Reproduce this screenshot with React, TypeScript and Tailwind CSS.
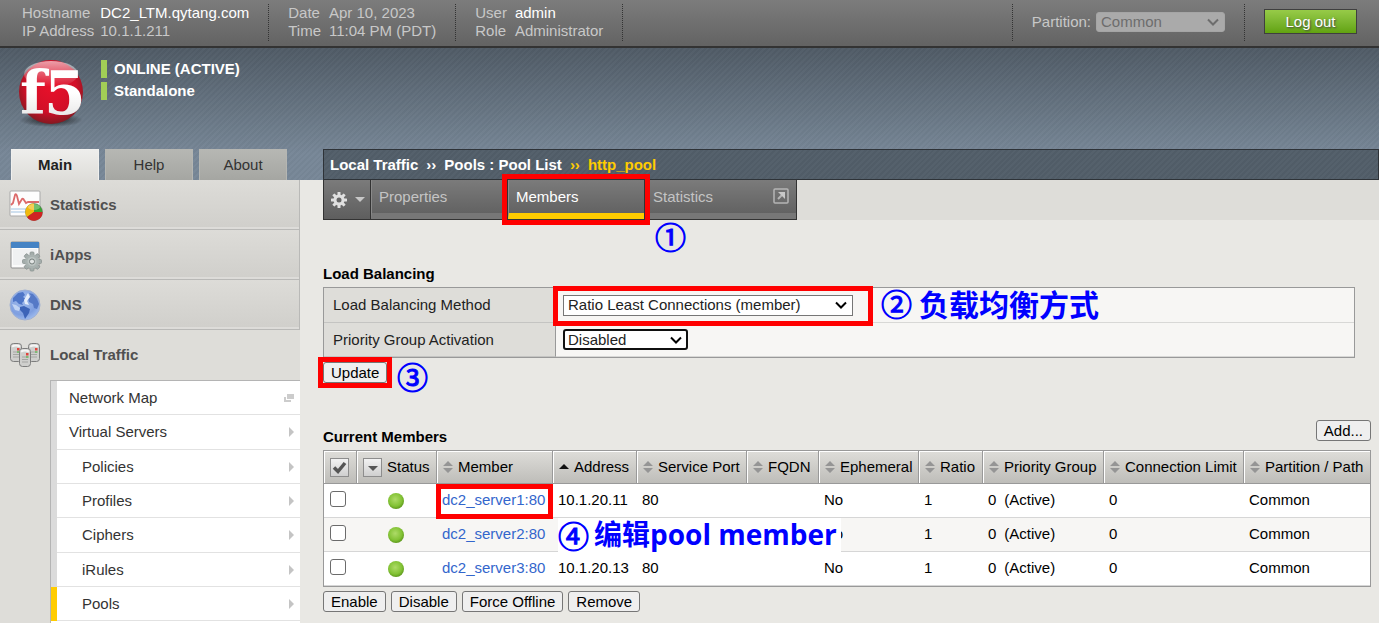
import type { ReactNode } from 'react';

const STRIPES =
  'bg-[repeating-linear-gradient(135deg,rgba(255,255,255,0.02)_0px,rgba(255,255,255,0.02)_2px,rgba(0,0,0,0.02)_2px,rgba(0,0,0,0.02)_4px)]';

function Logo() {
  return (
    <svg viewBox="0 0 72 72" className="size-[72px] overflow-visible" aria-label="f5">
      <defs>
        <radialGradient id="ball" cx="0.5" cy="0.42" r="0.6">
          <stop offset="0" stopColor="#e8102a" />
          <stop offset="0.65" stopColor="#d20f28" />
          <stop offset="1" stopColor="#7c1a20" />
        </radialGradient>
        <linearGradient id="shine" x1="0" y1="0" x2="0" y2="1">
          <stop offset="0" stopColor="#fff" stopOpacity="0.6" />
          <stop offset="1" stopColor="#fff" stopOpacity="0" />
        </linearGradient>
        <radialGradient id="shade">
          <stop offset="0" stopColor="#111" stopOpacity="0.9" />
          <stop offset="1" stopColor="#111" stopOpacity="0" />
        </radialGradient>
        <linearGradient id="letters" x1="0" y1="0" x2="0" y2="1">
          <stop offset="0.5" stopColor="#fff" />
          <stop offset="1" stopColor="#ddd" />
        </linearGradient>
      </defs>
      <ellipse cx="36" cy="60" rx="32" ry="7" fill="url(#shade)" />
      <circle cx="36" cy="32" r="32" fill="url(#ball)" />
      <ellipse cx="36" cy="14" rx="27" ry="13" fill="url(#shine)" />
      <g fill="url(#letters)" fontWeight="700" fontFamily="DejaVu Serif, serif">
        <text x="5" y="54" fontSize="60">f</text>
        <text x="29" y="54" fontSize="60">5</text>
      </g>
    </svg>
  );
}

function StatisticsIcon() {
  return (
    <svg viewBox="0 0 36 36" className="size-9">
      <rect x="2" y="4" width="30" height="25" rx="1" fill="#fdfdfd" stroke="#a9a9a9" />
      <path d="M3 22h28M3 25h20" stroke="#cfe0ef" strokeWidth="2" />
      <path d="M3 18l2-2 2-8q1-2 2 1l2 8 3-5q1-1 2 1l2 3 2-1h11" fill="none" stroke="#dc6a6a" strokeWidth="1.800" />
      <circle cx="26" cy="25" r="8.500" fill="#39a532" stroke="#666" strokeWidth="0.500" />
      <path d="M26 25V16.500a8.500 8.500 0 0 0-7 13.500z" fill="#f1b90e" />
      <path d="M26 25l-7 5a8.500 8.500 0 0 0 15.500-5z" fill="#cf2323" />
      <ellipse cx="26" cy="20" rx="6" ry="3" fill="#fff" opacity="0.3" />
    </svg>
  );
}

function AppsIcon() {
  const teeth = [0, 45, 90, 135];
  return (
    <svg viewBox="0 0 36 36" className="size-9">
      <rect x="3" y="5" width="28" height="26" rx="1" fill="#fbfbfb" stroke="#8f8f8f" />
      <rect x="3" y="5" width="28" height="6" fill="#4583c4" />
      <rect x="5" y="12" width="24" height="16" fill="#f0f1f2" />
      <g fill="#a3acaa" stroke="#8b9492" strokeWidth="0.800">
        {teeth.map((a) => (
          <rect key={a} x="22" y="15" width="4" height="19" rx="1" transform={`rotate(${a} 24 24.500)`} />
        ))}
      </g>
      <circle cx="24" cy="24.500" r="7" fill="#a9b2b0" />
      <circle cx="24" cy="24.500" r="4.500" fill="#bcc4c2" />
      <circle cx="24" cy="24.500" r="2.500" fill="#e2e5e4" stroke="#77807e" />
    </svg>
  );
}

function DnsIcon() {
  return (
    <svg viewBox="0 0 36 36" className="size-9">
      <defs>
        <radialGradient id="sea" cx="0.4" cy="0.3" r="0.75">
          <stop offset="0" stopColor="#a3bdec" />
          <stop offset="0.7" stopColor="#7f9fe0" />
          <stop offset="1" stopColor="#a4c0f0" />
        </radialGradient>
      </defs>
      <circle cx="17" cy="18" r="15" fill="url(#sea)" stroke="#9fb0d3" />
      <path d="M5 11l5-5 5-1 2 3-2 2 3 2-4 4 1 2-4-1-3-3-3 1z" fill="#4f76c8" />
      <path d="M12 20l4-1 6 3-1 4-4 6-2-6-3-3z" fill="#3d64b8" />
      <path d="M21 6l4 1 4 5 2 5-2 5-3-1-1-4-4-2-1-4 3-2z" fill="#5579c6" />
      <path d="M16 13l4-7 2 4-3 4 2 4-4-1z" fill="#e6eefb" />
      <path d="M4 17l4 1 4 3-1 3-4-1z" fill="#d9e5fa" opacity="0.7" />
    </svg>
  );
}

function Server({ x, y }: { x: number; y: number }) {
  return (
    <g transform={`translate(${x} ${y})`}>
      <rect x="0.500" y="0.500" width="11" height="18" rx="3" fill="#cfcfcd" stroke="#7d7d7d" />
      <path d="M2 3.500q4-2 8 0" stroke="#f5f5f5" strokeWidth="2" fill="none" />
      <path d="M3 9h6M3 11.500h6M3 14h6" stroke="#a5a5a3" />
      <rect x="7" y="5" width="2.500" height="2.500" fill="#e0443c" />
      <rect x="7" y="8" width="2.500" height="2" fill="#7fba76" />
    </g>
  );
}

function TrafficIcon() {
  return (
    <svg viewBox="0 0 36 36" className="size-9">
      <Server x={2} y={6} />
      <Server x={20} y={6} />
      <Server x={11} y={11} />
    </svg>
  );
}

const NAV: { label: string; icon: ReactNode }[] = [
  { label: 'Statistics', icon: <StatisticsIcon /> },
  { label: 'iApps', icon: <AppsIcon /> },
  { label: 'DNS', icon: <DnsIcon /> },
];

const SUBNAV = [
  { label: 'Network Map', nested: false, popup: true },
  { label: 'Virtual Servers', nested: false },
  { label: 'Policies', nested: true },
  { label: 'Profiles', nested: true },
  { label: 'Ciphers', nested: true },
  { label: 'iRules', nested: true },
  { label: 'Pools', nested: true, active: true },
];

const COLUMNS = ['Member', 'Address', 'Service Port', 'FQDN', 'Ephemeral', 'Ratio', 'Priority Group', 'Connection Limit', 'Partition / Path'];

const MEMBERS = [
  { name: 'dc2_server1:80', address: '10.1.20.11', port: '80' },
  { name: 'dc2_server2:80', note: true },
  { name: 'dc2_server3:80', address: '10.1.20.13', port: '80' },
];

function InfoPair({ rows, gap = 'gap-x-2' }: { rows: [string, string, boolean?][]; gap?: string }) {
  return (
    <dl className={`grid grid-cols-[auto_auto] items-start self-start leading-[18px] ${gap}`}>
      {rows.map(([k, v, strong]) => (
        <div key={k} className="contents">
          <dt className="text-[#c8c8c8]">{k}</dt>
          <dd className={strong ? 'text-white' : 'text-[#c8c8c8]'}>{v}</dd>
        </div>
      ))}
    </dl>
  );
}

function Divider() {
  return <div className="h-[37px] border-l border-dotted border-[#333]" />;
}

function Chevron() {
  return (
    <svg viewBox="0 0 12 8" className="pointer-events-none absolute top-1/2 right-[6px] h-2 w-3 -translate-y-1/2">
      <path d="M1 1.500l5 5 5-5" fill="none" stroke="currentColor" strokeWidth="2" />
    </svg>
  );
}

function PushButton({ children }: { children: ReactNode }) {
  return (
    <button className="h-[21px] rounded-[3px] border border-[#767676] bg-[#efefef] px-[7px] leading-[18px] text-black">
      {children}
    </button>
  );
}

function CircledNumber({ children }: { children: ReactNode }) {
  return (
    <span className="font-['Noto_Sans_CJK_SC',sans-serif] text-[31px] leading-8 font-normal [-webkit-text-stroke:1px_#00f]">
      {children}
    </span>
  );
}

function SortArrows() {
  return (
    <svg viewBox="0 0 10 12" className="h-3 w-[10px]">
      <path d="M5 0l5 5H0zM5 12l5-5H0z" fill="#959595" />
    </svg>
  );
}

const TH = 'h-[33px] border-b border-b-[#999] border-r border-r-[#999] bg-linear-to-b from-[#deddd9] to-[#bebdb9] p-0 shadow-[inset_1px_1px_0_#fff] font-normal last:border-r-0';

export default function App() {
  return (
    <div className="flex h-screen flex-col overflow-hidden bg-[#e9e8e4] font-['Liberation_Sans',Arial,sans-serif] text-[15px] leading-[18px] text-black">
      <header className="flex h-12 shrink-0 justify-between border-b-2 border-[#333] bg-linear-to-b from-[#7c7c7c] to-[#636363] pt-1">
        <div className="flex gap-[19px] pl-[22px]">
          <InfoPair gap="gap-x-[6px]" rows={[['Hostname', 'DC2_LTM.qytang.com', true], ['IP Address', '10.1.1.211']]} />
          <Divider />
          <InfoPair rows={[['Date', 'Apr 10, 2023'], ['Time', '11:04 PM (PDT)']]} />
          <Divider />
          <InfoPair rows={[['User', 'admin', true], ['Role', 'Administrator']]} />
          <Divider />
        </div>
        <div className="flex gap-[19px] pr-[22px]">
          <Divider />
          <div className="flex items-start gap-[5px] pt-2">
            <label htmlFor="partition" className="leading-5 text-[#c8c8c8]">Partition:</label>
            <div className="relative w-[129px] text-[#6d6d6d]">
              <select id="partition" disabled className="block h-5 w-full appearance-none rounded-[3px] border border-[#a5a5a5] bg-[#aaa] pl-1 leading-[18px] text-[#6d6d6d] opacity-100">
                <option>Common</option>
              </select>
              <Chevron />
            </div>
          </div>
          <Divider />
          <button className="mt-[5px] h-[25px] w-[93px] border border-[#3f3f3f] bg-linear-to-b from-[#97cb48] to-[#62a30f] text-white [text-shadow:1px_1px_2px_#444]">
            Log out
          </button>
        </div>
      </header>

      <div className="shrink-0 bg-linear-to-b from-[#505b66] to-[#778797] to-80%">
        <div className={`flex h-[132px] flex-col justify-between ${STRIPES}`}>
          <div className="flex gap-[14px] pt-3 pl-[15px] font-bold text-white">
            <Logo />
            <div className="flex flex-col gap-1">
              <div className="border-l-6 border-[#a2ce56] pl-[7px]">ONLINE (ACTIVE)</div>
              <div className="border-l-6 border-[#a2ce56] pl-[7px]">Standalone</div>
            </div>
          </div>
          <div className="flex items-end">
            <nav className="flex w-[323px] shrink-0 gap-[6px] pl-[11px] text-[#333]">
              <button className="h-[31px] w-[88px] border border-b-0 border-[#f0f0ee] bg-linear-to-b from-[#eeeeec] to-[#deddd9] font-bold text-[#222]">Main</button>
              <button className="h-[31px] w-[88px] border border-b-0 border-[#b5b6b2] bg-linear-to-b from-[#b6b7b3] to-[#a5a6a2]">Help</button>
              <button className="h-[31px] w-[88px] border border-b-0 border-[#b5b6b2] bg-linear-to-b from-[#b6b7b3] to-[#a5a6a2]">About</button>
            </nav>
            <div className="min-w-0 flex-1 border border-[#2e3338] bg-[#525e69]">
              <h1 className={`flex h-[29px] items-center gap-[8px] pl-[6px] font-bold whitespace-nowrap text-white ${STRIPES}`}>
                <span>Local Traffic</span><span>››</span><span>Pools : Pool List</span>
                <span className="text-[#fc0]">››</span><span className="text-[#fc0]">http_pool</span>
              </h1>
            </div>
          </div>
        </div>
      </div>

      <div className="flex min-h-0 flex-1">
        <aside className="w-[300px] shrink-0 bg-[#deddd9] text-[#333]">
          {NAV.map((n) => (
            <a key={n.label} href="#" className="flex h-[50px] items-center gap-[6px] border-r border-b border-[#b9b9b7] bg-linear-to-b from-[#dddcd8] to-[#d0cfcb] pl-2 font-bold text-[#505050] shadow-[inset_0_-2px_0_#dddcd9]">
              {n.icon}{n.label}
            </a>
          ))}
          <a href="#" className="flex h-[50px] items-center gap-[6px] pl-2 font-bold text-[#505050]">
            <TrafficIcon />Local Traffic
          </a>
          <ul className="ml-[50px] border-t border-l border-[#b4b4b4] bg-white pb-1">
            {SUBNAV.map((s) => (
              <li key={s.label} className={`h-[34px] border-l-6 nth-[3n+2]:h-[35px] ${s.active ? 'border-[#fc0]' : 'border-[#dbdbdb]'}`}>
                <a href="#" className={`flex h-full items-center justify-between border-b border-[#e2e2e2] pr-[6px] ${s.nested ? 'pl-[25px]' : 'pl-3'}`}>
                  {s.label}
                  {s.popup ? (
                    <svg viewBox="0 0 10 8" className="h-2 w-[10px]"><path d="M3 0h7v5H3zM0 3h2v3h5v2H0z" fill="#ccc" /></svg>
                  ) : (
                    <svg viewBox="0 0 5 10" className="h-[10px] w-[5px]"><path d="M0 0l5 5-5 5z" fill="#c4c4c4" /></svg>
                  )}
                </a>
              </li>
            ))}
          </ul>
        </aside>

        <main className="flex min-w-0 flex-1 flex-col pl-[23px]">
          <div className="flex h-10 shrink-0 bg-[#deddd9]">
            <nav className="flex w-[474px] border border-t-0 border-[#333] bg-linear-to-b from-[#7b7b7b] to-[#5e5e5e] text-[#c4c4c4]">
              <button aria-label="Options" className="flex w-[47px] items-center gap-2 border-r border-[#333] pl-[7px]">
                <svg viewBox="0 0 16 16" className="size-4">
                  <g fill="#e0e0e0">
                    {[0, 45, 90, 135].map((a) => (
                      <rect key={a} x="6.500" y="0" width="3" height="16" rx="0.500" transform={`rotate(${a} 8 8)`} />
                    ))}
                    <circle cx="8" cy="8" r="5.500" />
                  </g>
                  <circle cx="8" cy="8" r="2.500" fill="#666" />
                </svg>
                <svg viewBox="0 0 10 5" className="h-[5px] w-[10px]"><path d="M0 0h10L5 5z" fill="#c8c8c8" /></svg>
              </button>
              <a href="#" className="w-[136px] border-b-6 border-l border-b-[#777] border-l-[#8a8a8a] pt-2 pl-[7px]">Properties</a>
              <a href="#" className="relative w-[138px] border-x border-x-[#333] text-white">
                <span className="block h-full border-b-6 border-l border-b-[#fc0] border-l-[#8a8a8a] pt-2 pl-[7px]">Members</span>
                <span className="pointer-events-none absolute -inset-[6px] z-10 border-5 border-[#f00]" />
                <span className="absolute top-10 left-[147px] text-[#00f]"><CircledNumber>①</CircledNumber></span>
              </a>
              <a href="#" className="flex flex-1 justify-between border-b-6 border-[#777] pt-2 pr-[7px] pl-2">
                Statistics
                <svg viewBox="0 0 16 16" className="size-4" fill="none" stroke="#b5b5b5">
                  <rect x="1" y="1" width="14" height="14" rx="1" strokeWidth="1.500" />
                  <path d="M5 11l5-5" strokeWidth="2" /><path d="M5 4h7v7z" fill="#c8c8c8" stroke="none" />
                </svg>
              </a>
            </nav>
          </div>

          <h2 className="mt-[45px] font-bold">Load Balancing</h2>
          <div className="mt-1 mr-6">
            <table className="w-full table-fixed border-separate border-spacing-0 border border-[#999]">
              <tbody>
                <tr>
                  <th className="h-[35px] w-[232px] border-r border-b border-r-[#999] border-b-[#c4c4c2] bg-[#deddd9] pl-[9px] text-left font-normal text-[#222]">
                    <label htmlFor="method">Load Balancing Method</label>
                  </th>
                  <td className="border-b border-[#d8d8d6] bg-[#f7f6f4] p-0 pl-[7px]">
                    <div className="relative w-[290px]">
                      <select id="method" className="block h-[21px] w-full appearance-none border border-[#767676] bg-white pl-1 leading-[18px] text-[#222]">
                        <option>Ratio Least Connections (member)</option>
                      </select>
                      <Chevron />
                      <span className="pointer-events-none absolute -top-[9px] -right-5 -bottom-[10px] -left-[10px] border-5 border-[#f00]" />
                      <div className="absolute -top-2 left-[318px] flex items-center gap-[7px] whitespace-nowrap text-[#00f]">
                        <CircledNumber>②</CircledNumber>
                        <span className="font-['Noto_Sans_CJK_SC',sans-serif] text-[30px] leading-8 font-bold">负载均衡方式</span>
                      </div>
                    </div>
                  </td>
                </tr>
                <tr>
                  <th className="h-[34px] border-r border-b border-r-[#999] border-b-[#c4c4c2] bg-[#deddd9] pl-[9px] text-left font-normal text-[#222]">
                    <label htmlFor="priority">Priority Group Activation</label>
                  </th>
                  <td className="border-b border-[#d8d8d6] bg-[#f7f6f4] p-0 pl-[7px]">
                    <div className="relative w-[125px]">
                      <select id="priority" className="block h-[21px] w-full appearance-none rounded-[3px] border-2 border-[#101010] bg-white pl-[3px] leading-[17px] text-[#222]">
                        <option>Disabled</option>
                      </select>
                      <Chevron />
                    </div>
                  </td>
                </tr>
              </tbody>
            </table>
          </div>
          <div className="relative mt-1 w-fit">
            <PushButton>Update</PushButton>
            <span className="pointer-events-none absolute -inset-[5px] border-5 border-[#f00]" />
            <span className="absolute -top-[2px] left-[74px] text-[#00f]"><CircledNumber>③</CircledNumber></span>
          </div>

          <section className="mt-[37px] mr-2">
            <div className="flex h-[30px] items-start justify-between">
              <h2 className="mt-2 font-bold">Current Members</h2>
              <PushButton>Add...</PushButton>
            </div>
            <table className="w-full border-separate border-spacing-0 border border-[#999] whitespace-nowrap">
              <colgroup>
                <col className="w-[33px]" /><col className="w-[80px]" /><col className="w-[116px]" /><col className="w-[84px]" />
                <col className="w-[110px]" /><col className="w-[72px]" /><col className="w-[100px]" /><col className="w-[64px]" />
                <col className="w-[121px]" /><col className="w-[140px]" /><col className="w-[126px]" />
              </colgroup>
              <thead>
                <tr>
                  <th className={TH}>
                    <button aria-label="Select all" className="ml-[6px] block size-[19px] border border-[#8d8d8d] bg-linear-to-b from-[#f2f2f2] to-[#cfcfcf]">
                      <svg viewBox="0 0 17 17" className="size-[17px]"><path d="M3 8.500l4 4L14 4" fill="none" stroke="#555" strokeWidth="3.500" /></svg>
                    </button>
                  </th>
                  <th className={TH}>
                    <div className="flex items-center gap-[5px] pl-[6px]">
                      <button aria-label="Filter status" className="size-[19px] border border-[#8d8d8d] bg-linear-to-b from-[#f2f2f2] to-[#cfcfcf]">
                        <svg viewBox="0 0 17 17" className="size-[17px]"><path d="M4 7h10l-5 5z" fill="#555" /></svg>
                      </button>
                      <span>Status</span>
                    </div>
                  </th>
                  {COLUMNS.map((c) => (
                    <th key={c} className={TH}>
                      <button className="flex items-center gap-[5px] pl-[6px]">
                        {c === 'Address' ? (
                          <svg viewBox="0 0 10 12" className="h-3 w-[10px]"><path d="M5 3l5 5H0z" fill="#111" /></svg>
                        ) : (
                          <SortArrows />
                        )}
                        {c}
                      </button>
                    </th>
                  ))}
                </tr>
              </thead>
              <tbody>
                {MEMBERS.map((m, i) => (
                  <tr key={m.name} className="bg-white even:bg-[#f7f6f4] [&>td]:h-[34px] [&>td]:border-b [&>td]:border-[#d6d6d6] [&>td]:p-0 [&>td]:pb-px [&>td]:pl-[5px]">
                    <td>
                      <input type="checkbox" aria-label={`Select ${m.name}`} className="mb-[2px] ml-px block size-4 appearance-none rounded-[3px] border border-[#6b6b6b] bg-white" />
                    </td>
                    <td>
                      <svg viewBox="0 0 18 18" className="mt-[2px] ml-[25px] block size-[18px]" role="img" aria-label="Available">
                        <defs>
                          <radialGradient id={`dot${i}`} cx="0.45" cy="0.4" r="0.6">
                            <stop offset="0" stopColor="#aedb68" />
                            <stop offset="0.7" stopColor="#82c234" />
                            <stop offset="1" stopColor="#5f9a1d" />
                          </radialGradient>
                        </defs>
                        <circle cx="9" cy="9" r="8" fill={`url(#dot${i})`} />
                      </svg>
                    </td>
                    <td>
                      <div className="relative flex h-8 items-center">
                        <a href="#" className="text-[#36c]">{m.name}</a>
                        {i === 0 && <span className="pointer-events-none absolute top-0 right-0 -bottom-[3px] -left-[6px] border-5 border-[#f00]" />}
                      </div>
                    </td>
                    <td>
                      <div className="relative flex h-8 items-center">
                        {m.address}
                        {m.note && (
                          <div className="absolute top-0 left-0 z-10 flex h-[34px] w-[283px] items-center gap-[5px] bg-white text-[#00f]">
                            <CircledNumber>④</CircledNumber>
                            <span className="pb-[2px] font-['Open_Sans','Noto_Sans_CJK_SC',sans-serif] text-[28px] leading-8 font-bold">编辑pool member</span>
                          </div>
                        )}
                      </div>
                    </td>
                    <td>{m.port}</td>
                    <td />
                    <td>No</td>
                    <td>1</td>
                    <td><span className="flex gap-2"><span>0</span><span>(Active)</span></span></td>
                    <td>0</td>
                    <td>Common</td>
                  </tr>
                ))}
              </tbody>
            </table>
            <div className="mt-1 flex gap-[5px]">
              <PushButton>Enable</PushButton>
              <PushButton>Disable</PushButton>
              <PushButton>Force Offline</PushButton>
              <PushButton>Remove</PushButton>
            </div>
          </section>
        </main>
      </div>
    </div>
  );
}
